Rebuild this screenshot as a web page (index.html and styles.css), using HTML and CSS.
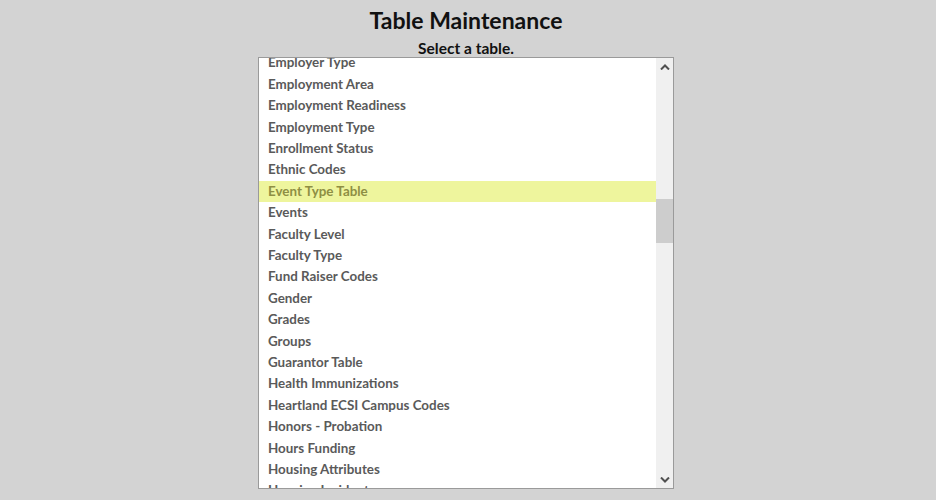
FILE: index.html
```html
<!DOCTYPE html>
<html lang="en">
<head>
<meta charset="utf-8">
<title>Table Maintenance</title>
<link rel="stylesheet" href="styles.css">
</head>
<body>
<div class="page">
  <h1 class="title">Table Maintenance</h1>
  <div class="subtitle">Select a table.</div>
  <div class="listbox">
    <div class="list">
      <div class="items">
        <div class="item">Employer Type</div>
        <div class="item">Employment Area</div>
        <div class="item">Employment Readiness</div>
        <div class="item">Employment Type</div>
        <div class="item">Enrollment Status</div>
        <div class="item">Ethnic Codes</div>
        <div class="item selected">Event Type Table</div>
        <div class="item">Events</div>
        <div class="item">Faculty Level</div>
        <div class="item">Faculty Type</div>
        <div class="item">Fund Raiser Codes</div>
        <div class="item">Gender</div>
        <div class="item">Grades</div>
        <div class="item">Groups</div>
        <div class="item">Guarantor Table</div>
        <div class="item">Health Immunizations</div>
        <div class="item">Heartland ECSI Campus Codes</div>
        <div class="item">Honors - Probation</div>
        <div class="item">Hours Funding</div>
        <div class="item">Housing Attributes</div>
        <div class="item">Housing Incidents</div>
      </div>
    </div>
    <div class="scrollbar">
      <div class="arrow">
        <svg width="10" height="6" viewBox="0 0 10 6"><path d="M1 5.5 L5 1.5 L9 5.5" fill="none" stroke="#505050" stroke-width="2"/></svg>
      </div>
      <div class="track">
        <div class="thumb"></div>
      </div>
      <div class="arrow">
        <svg width="10" height="6" viewBox="0 0 10 6"><path d="M1 0.5 L5 4.5 L9 0.5" fill="none" stroke="#505050" stroke-width="2"/></svg>
      </div>
    </div>
  </div>
</div>
</body>
</html>
```

FILE: styles.css
```css
html, body {
  margin: 0;
  padding: 0;
  background: #d3d3d3;
}
body {
  font-family: Lato, "Open Sans", "Liberation Sans", sans-serif;
  width: 936px;
  height: 500px;
  overflow: hidden;
}
.page {
  width: 932px;
  display: flex;
  flex-direction: column;
  align-items: center;
}
.title {
  margin: 6px 0 0 0;
  font-size: 23px;
  line-height: 28px;
  font-weight: 700;
  color: #111;
}
.subtitle {
  margin-top: 5px;
  font-size: 15.5px;
  line-height: 18px;
  font-weight: 700;
  color: #111;
}
.listbox {
  margin-top: 0;
  box-sizing: border-box;
  width: 416px;
  height: 432px;
  border: 1px solid #9a9a9a;
  background: #fff;
  display: flex;
}
.list {
  flex: 1;
  overflow: hidden;
}
.items {
  margin-top: -5.7px;
}
.item {
  height: 21.42px;
  line-height: 21.42px;
  padding-left: 9px;
  font-size: 13.4px;
  font-weight: 700;
  color: #5a5a5a;
  white-space: nowrap;
}
.item.selected {
  background: #eef59d;
  color: #8e8f44;
}
.scrollbar {
  width: 17px;
  background: #f0f0f0;
  display: flex;
  flex-direction: column;
}
.arrow {
  height: 17px;
  display: flex;
  align-items: center;
  justify-content: center;
}
.track {
  flex: 1;
  display: flex;
  flex-direction: column;
}
.thumb {
  margin-top: 124px;
  height: 44px;
  background: #cdcdcd;
}
```
